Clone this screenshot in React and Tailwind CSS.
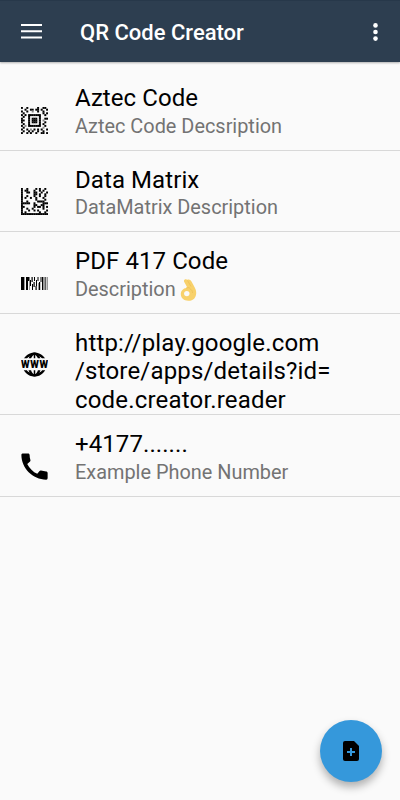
import React from 'react';
import { MdCall } from 'react-icons/md';

// One character per module, '#' is dark and '+' is half dark
const AZTEC = [
  '#..#.....#..##.',
  '..#..##.##.#..#',
  '#..#..+..#..#..',
  '.#..........#.#',
  '#.#.#######..#.',
  '.#..#.....#....',
  '#...#.###.#..##',
  '##..#.###.#.+..',
  '#...#.###.#..#.',
  '.#..#.....#.#..',
  '#.+.#######..#.',
  '.#..........+..',
  '#..#.+.#.#.#..#',
  '.#..#.#..#..#..',
  '#..#.#..#..##.#',
];

const DATA_MATRIX = [
  '#..#....#.#..#.',
  '#.##...#..#.#..',
  '#..##..##..#..#',
  '#......##.#..#.',
  '#..#...#..#..#.',
  '#.#..#..#...#..',
  '#.......#....#.',
  '#..#.....####..',
  '#####..#....###',
  '#......##..##..',
  '##.....#.##.#.#',
  '#..#..#.....#..',
  '#...#..#.#....#',
  '#.#.......#..#.',
  '###############',
];

const Modules = ({ rows }) => (
  <svg viewBox={`0 0 ${rows[0].length} ${rows.length}`} className="h-[27px] w-[27px]">
    {rows.map((row, y) =>
      [...row].map((cell, x) =>
        cell === '.' ? null : (
          <rect key={`${x}-${y}`} x={x - 0.05} y={y - 0.05} width="1.100" height="1.100" fill={cell === '#' ? '#000' : '#888'} />
        )
      )
    )}
  </svg>
);

const Pdf417 = () => (
  <svg viewBox="0 0 27 13" className="h-[13px] w-[27px]">
    <path fill="#000" d="M0 0h3v13H0zM5 0h2v13H5zM7 0h1.500v4H7zM9 3h1v6H9zM10.500 0h1.200v5h-1.200zM11 7h1v6h-1zM13 0h1v4h-1zM12.500 5h1.200v5h-1.200zM15 3h1v6h-1zM16.500 0h1v4h-1zM14.500 9h1.200v4h-1.200zM18 5h1.200v8H18zM19.500 0h1v5h-1zM21 0h1v13h-1z" />
    <path fill="#999" d="M3 0h1v13H3zM22 0h2v13h-2zM25.500 0H27v13h-1.500zM8 4h1v9H8zM17 6h1v7h-1z" />
    <path fill="#333" d="M24 0h.8v13H24z" />
  </svg>
);

const Globe = () => (
  <svg viewBox="0 0 27 25" className="h-[25px] w-[27px]">
    <defs>
      <clipPath id="caps">
        <path d="M0 0h27v6.200H0zM0 18.300h27V25H0z" />
      </clipPath>
    </defs>
    <g clipPath="url(#caps)" fill="none" stroke="#000" strokeWidth="2.400">
      <circle cx="13.500" cy="12.500" r="10.900" />
      <ellipse cx="13.500" cy="12.500" rx="5.600" ry="10.900" />
      <path d="M13.500 1v23" strokeWidth="1.500" />
    </g>
    <g fontSize="10" fontWeight="900" textAnchor="middle" fontFamily="Roboto, sans-serif">
      <text x="4.300" y="15.900" textLength="8.600" lengthAdjust="spacingAndGlyphs">W</text>
      <text x="13.500" y="15.900" textLength="8.600" lengthAdjust="spacingAndGlyphs">W</text>
      <text x="22.700" y="15.900" textLength="8.600" lengthAdjust="spacingAndGlyphs">W</text>
    </g>
  </svg>
);

const OkHand = () => (
  <svg viewBox="0 0 17 22" className="ml-1 h-[22px] w-[17px]">
    <path fill="#f8d16b" d="M4.500.8C5.300 0 6.500.2 7.500.8 9-.1 10.500.8 11.500 2.500L14.500 8c1.100 2 1.800 3.800 1.700 6.200-.2 4.400-2.700 7.500-7.700 7.600C4 21.900.8 19 .8 15.300c0-3.600 2.600-6 5.400-6.300L7 8 4.400 3.300C3.800 2.300 3.800 1.300 4.500.8z" />
    <path fill="none" stroke="#edbd55" strokeWidth=".7" d="M6.200 9 9.500 8.500M7.500 1.500 11 7.500M9.500 9.500c2 .8 3 2.500 3 4.500" />
    <circle cx="6.800" cy="14.600" r="2.700" fill="#fafafa" />
  </svg>
);

const items = [
  { icon: <Modules rows={AZTEC} />, title: 'Aztec Code', text: 'Aztec Code Decsription' },
  { icon: <Modules rows={DATA_MATRIX} />, title: 'Data Matrix', text: 'DataMatrix Description' },
  { icon: <Pdf417 />, title: 'PDF 417 Code', text: 'Description', emoji: true },
  { icon: <Globe />, lines: ['http://play.google.com', '/store/apps/details?id=', 'code.creator.reader'] },
  { icon: <MdCall size={35} />, title: '+4177.......', text: 'Example Phone Number' },
];

const Row = ({ item }) => (
  <li className={`flex border-b border-[#d8d8d8] ${item.lines ? 'h-[101.500px]' : 'h-[81.500px]'}`}>
    <div className={`flex w-[69px] shrink-0 items-center justify-center ${item.lines ? 'pt-0.5' : 'pt-[22px]'}`}>
      {item.icon}
    </div>
    <div className="pt-[15px] pl-1.5 text-2xl leading-[28.500px] text-black">
      {item.lines ? (
        item.lines.map((line) => <p key={line} className="tracking-[0.180px]">{line}</p>)
      ) : (
        <>
          <h2 className="tracking-[0.080px]">{item.title}</h2>
          <p className="flex items-center pt-[0.250px] text-[19.900px] text-[#737373]">
            {item.text}
            {item.emoji && <OkHand />}
          </p>
        </>
      )}
    </div>
  </li>
);

const App = () => (
  <div className="relative h-[800px] w-[400px] overflow-hidden bg-[#fafafa] font-[Roboto,sans-serif]">
    <header className="flex h-[62px] items-center border-t border-[#27384a] bg-[#2d3e50] pl-[21px] pr-[22px] text-white shadow-[0_1px_2px_rgba(0,0,0,0.3)]">
      <svg viewBox="0 0 21 15" className="h-[15px] w-[21px]" fill="#fff">
        <path d="M0 0h21v2H0zM0 6.200h21v2H0zM0 12.400h21v2H0z" />
      </svg>
      <h1 className="ml-[38px] pt-px text-[22px] font-medium">QR Code Creator</h1>
      <svg viewBox="0 0 5 18" className="ml-auto h-[18px] w-[5px]" fill="#fff">
        <circle cx="2.500" cy="2.400" r="2.300" />
        <circle cx="2.500" cy="9" r="2.300" />
        <circle cx="2.500" cy="15.600" r="2.300" />
      </svg>
    </header>

    <ul className="pt-[7px]">
      {items.map((item, index) => (
        <Row key={index} item={item} />
      ))}
    </ul>

    <button aria-label="Add code" className="absolute left-[320px] top-[720px] flex h-[62px] w-[62px] items-center justify-center rounded-full bg-[#3598db] shadow-[0_5px_9px_rgba(0,0,0,0.3)]">
      <svg viewBox="0 0 16 20" className="h-5 w-4">
        <path d="M2 0h9l5 5v13a2 2 0 0 1-2 2H2a2 2 0 0 1-2-2V2a2 2 0 0 1 2-2z" />
        <path d="M8 7v8M4 11h8" stroke="#3598db" strokeWidth="2" />
      </svg>
    </button>
  </div>
);

export default App;
